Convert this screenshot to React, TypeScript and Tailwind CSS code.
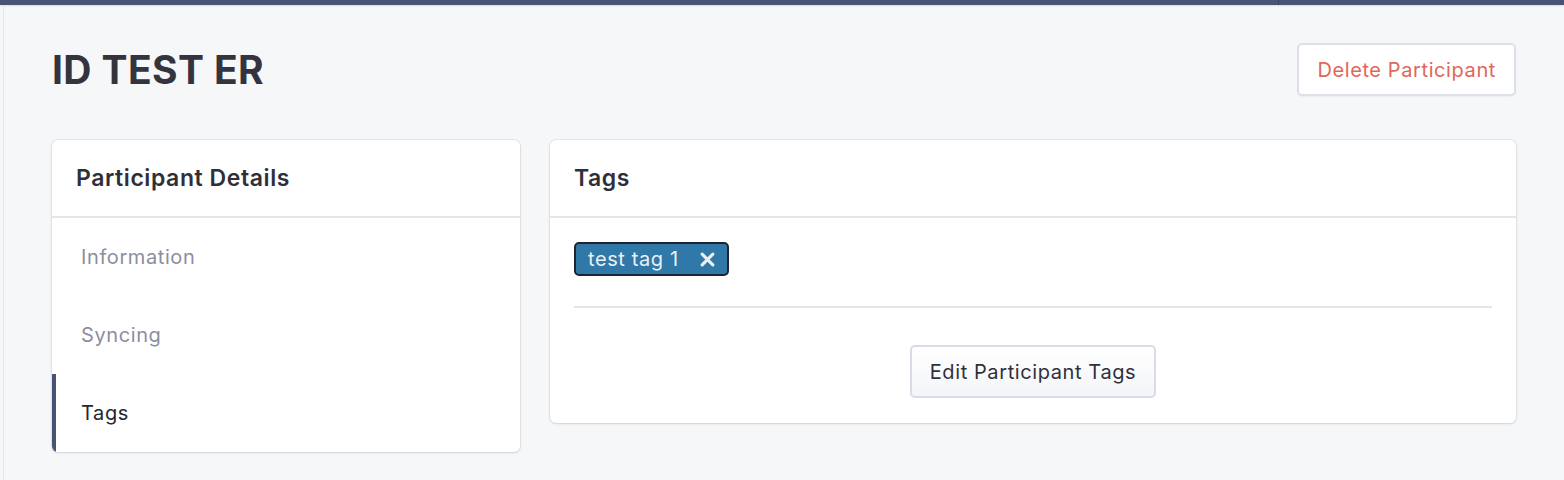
import React from 'react';

const navItems = ['Information', 'Syncing', 'Tags'];

const App: React.FC = () => {
  return (
    <div className="min-h-screen bg-[#f6f7f9] font-['Inter',sans-serif] text-[#33333d]">
      {/* Top bar */}
      <div className="flex h-[5px] bg-[#4a5275] shadow-[0_1px_2px_rgba(0,0,0,0.12)]">
        <div className="w-[1279px] border-r border-[#3d4466]" />
      </div>

      <div className="ml-[3px] min-h-[475px] border-l border-[#e4e6ea] pl-[48px] pr-[48px]">
        {/* Header */}
        <div className="flex items-center justify-between pt-[38px]">
          <h1 className="text-[39px] font-bold leading-none tracking-[0.01em] text-[#34343e]">ID TEST ER</h1>
          <button className="h-[53px] rounded-[5px] border-2 border-[#dde0e8] bg-white px-[18px] text-[20px] tracking-[0.03em] text-[#e0675a] shadow-[0_1px_1px_rgba(0,0,0,0.04)]">
            Delete Participant
          </button>
        </div>

        {/* Cards */}
        <div className="mt-[44px] flex items-start gap-[30px]">
          {/* Sidebar card */}
          <div className="w-[468px] overflow-hidden rounded-[6px] bg-white shadow-[0_0_0_1px_rgba(0,0,0,0.06),0_1px_3px_rgba(0,0,0,0.1)]">
            <div className="flex h-[78px] items-center border-b-2 border-[#e6e6e9] px-[24px]">
              <h2 className="text-[23px] font-semibold tracking-[0.025em] text-[#2f2f39]">Participant Details</h2>
            </div>
            <nav>
              {navItems.map((item) => (
                <div
                  key={item}
                  className={
                    item === 'Tags'
                      ? 'flex h-[78px] items-center border-l-4 border-[#4a5275] pl-[25px] text-[20px] tracking-[0.03em] text-[#26262e]'
                      : 'flex h-[78px] items-center border-l-4 border-transparent pl-[25px] text-[20px] tracking-[0.03em] text-[#8b8e9e]'
                  }
                >
                  {item}
                </div>
              ))}
            </nav>
          </div>

          {/* Tags card */}
          <div className="flex-1 rounded-[6px] bg-white shadow-[0_0_0_1px_rgba(0,0,0,0.06),0_1px_3px_rgba(0,0,0,0.1)]">
            <div className="flex h-[78px] items-center border-b-2 border-[#e6e6e9] px-[24px]">
              <h2 className="text-[23px] font-semibold tracking-[0.025em] text-[#2f2f39]">Tags</h2>
            </div>
            <div className="px-[24px] pt-[24px] pb-[25px]">
              <div className="flex">
                <span className="flex h-[34px] items-center gap-[20px] rounded-[5px] border-2 border-[#1f2433] bg-[#2f78a8] pl-[12px] pr-[11px] text-[20px] tracking-[0.03em] text-[#eaf0f5]">
                  test tag 1
                  <svg width="17" height="17" viewBox="0 0 16 16" className="text-[#eaf0f5]">
                    <path d="M3 3 L13 13 M13 3 L3 13" stroke="currentColor" strokeWidth="3" strokeLinecap="round" />
                  </svg>
                </span>
              </div>
              <div className="mt-[30px] h-[2px] bg-[#e6e6e9]" />
              <div className="mt-[37px] flex justify-center">
                <button className="h-[53px] rounded-[5px] border-2 border-[#d8dce6] bg-gradient-to-b from-white to-[#f4f5f8] px-[18px] text-[20px] tracking-[0.03em] text-[#30303a]">
                  Edit Participant Tags
                </button>
              </div>
            </div>
          </div>
        </div>
      </div>
    </div>
  );
};

export default App;
